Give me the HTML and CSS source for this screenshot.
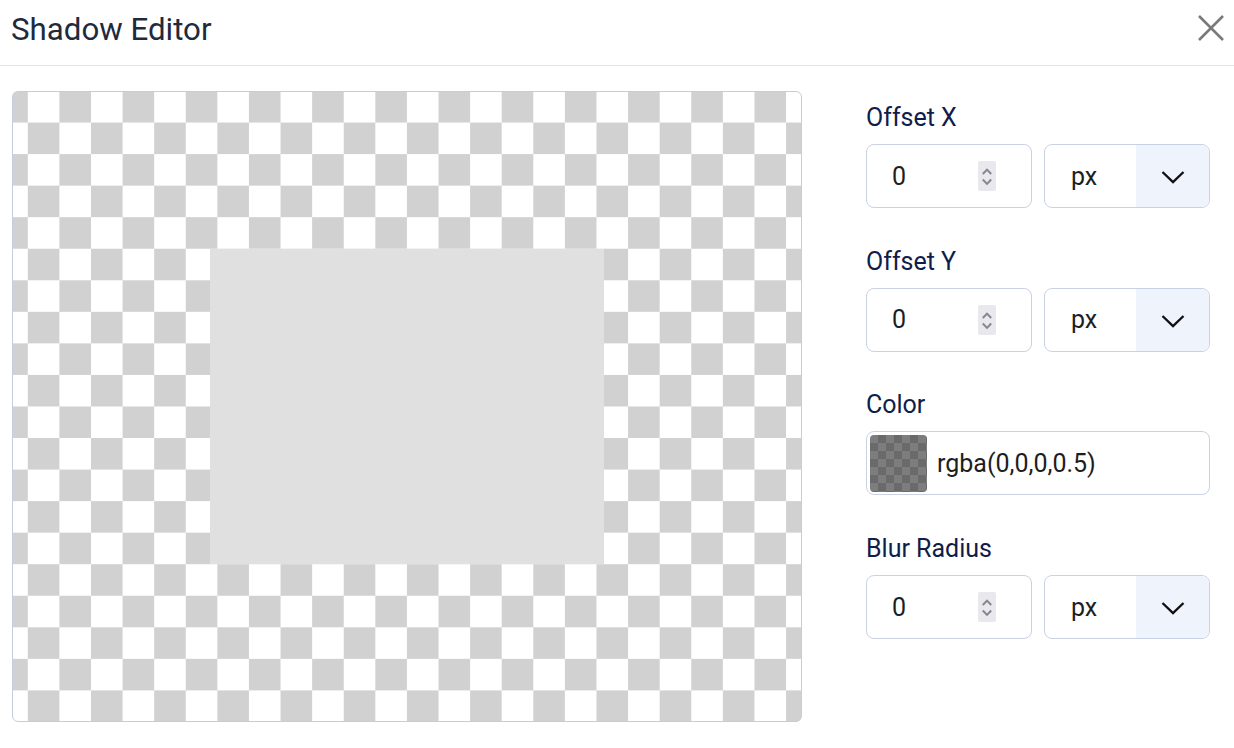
FILE: index.html
```html
<!DOCTYPE html>
<html lang="en">
<head>
<meta charset="utf-8">
<title>Shadow Editor</title>
<link rel="stylesheet" href="styles.css">
</head>
<body>
<div class="dialog">
  <header class="header">
    <h1 class="title">Shadow Editor</h1>
    <button class="close" aria-label="Close">
      <svg width="26" height="26" viewBox="0 0 26 26"><path d="M1 1L25 25M25 1L1 25" stroke="#7a7a7a" stroke-width="2.6" fill="none"/></svg>
    </button>
  </header>
  <main class="content">
    <div class="preview">
      <div class="shape"></div>
    </div>
    <div class="panel">
      <div class="field">
        <label class="label">Offset X</label>
        <div class="pair">
          <div class="num">
            <span class="value">0</span>
            <span class="spin">
              <svg width="18" height="30" viewBox="0 0 18 30"><path d="M4.8 13L9 8.6L13.2 13M4.8 18.5L9 22.9L13.2 18.5" stroke="#86868c" stroke-width="2" fill="none"/></svg>
            </span>
          </div>
          <div class="select">
            <span class="unit">px</span>
            <span class="arrow"><svg width="26" height="16" viewBox="0 0 26 16"><path d="M2.5 3L13 13L23.5 3" stroke="#111" stroke-width="2.4" fill="none"/></svg></span>
          </div>
        </div>
      </div>
      <div class="field">
        <label class="label">Offset Y</label>
        <div class="pair">
          <div class="num">
            <span class="value">0</span>
            <span class="spin">
              <svg width="18" height="30" viewBox="0 0 18 30"><path d="M4.8 13L9 8.6L13.2 13M4.8 18.5L9 22.9L13.2 18.5" stroke="#86868c" stroke-width="2" fill="none"/></svg>
            </span>
          </div>
          <div class="select">
            <span class="unit">px</span>
            <span class="arrow"><svg width="26" height="16" viewBox="0 0 26 16"><path d="M2.5 3L13 13L23.5 3" stroke="#111" stroke-width="2.4" fill="none"/></svg></span>
          </div>
        </div>
      </div>
      <div class="field">
        <label class="label">Color</label>
        <div class="color">
          <span class="swatch"></span>
          <span class="cvalue">rgba(0,0,0,0.5)</span>
        </div>
      </div>
      <div class="field">
        <label class="label">Blur Radius</label>
        <div class="pair">
          <div class="num">
            <span class="value">0</span>
            <span class="spin">
              <svg width="18" height="30" viewBox="0 0 18 30"><path d="M4.8 13L9 8.6L13.2 13M4.8 18.5L9 22.9L13.2 18.5" stroke="#86868c" stroke-width="2" fill="none"/></svg>
            </span>
          </div>
          <div class="select">
            <span class="unit">px</span>
            <span class="arrow"><svg width="26" height="16" viewBox="0 0 26 16"><path d="M2.5 3L13 13L23.5 3" stroke="#111" stroke-width="2.4" fill="none"/></svg></span>
          </div>
        </div>
      </div>
    </div>
  </main>
</div>
</body>
</html>
```
FILE: styles.css
```css
* { box-sizing: border-box; }
html, body { margin: 0; padding: 0; background: #fff; }
body {
  font-family: Roboto, "Liberation Sans", Arial, sans-serif;
  width: 1234px;
  height: 748px;
  overflow: hidden;
}
.header {
  height: 66px;
  border-bottom: 1px solid #e1e3e8;
  display: flex;
  justify-content: space-between;
  align-items: flex-start;
  padding: 12px 10px 0 11px;
}
.title {
  margin: 0;
  font-size: 31.25px;
  line-height: 36px;
  font-weight: 400;
  color: #1f2a3e;
}
.close {
  border: 0;
  background: none;
  padding: 0;
  margin-top: 3px;
  width: 26px;
  height: 26px;
  display: block;
}
.close svg { display: block; }
.content {
  display: flex;
  gap: 64px;
  padding: 25px 0 0 12px;
}
.preview {
  width: 790px;
  height: 631px;
  border: 1px solid #c3cddc;
  border-radius: 6px;
  background-color: #fff;
  background-image: conic-gradient(#fff 25%, #d1d1d1 0 50%, #fff 0 75%, #d1d1d1 0);
  background-size: 63.2px 63.1px;
  background-origin: border-box;
  background-position: -15.8px 0;
  display: flex;
  align-items: center;
  justify-content: center;
}
.shape {
  width: 50%;
  height: 50%;
  background: #e0e0e0;
}
.panel {
  width: 344px;
  padding-top: 13px;
  display: flex;
  flex-direction: column;
  gap: 39.7px;
}
.field {
  display: flex;
  flex-direction: column;
  gap: 12px;
}
.label {
  font-size: 25px;
  line-height: 28px;
  color: #0e1d4a;
}
.pair {
  display: grid;
  grid-template-columns: 1fr 1fr;
  gap: 12px;
}
.num, .select, .color {
  height: 64px;
  border: 1px solid #c9d2e2;
  border-radius: 8px;
  display: flex;
  align-items: center;
  background: #fff;
}
.num {
  padding: 0 35px 0 25px;
  justify-content: space-between;
}
.value, .unit, .cvalue {
  font-size: 25px;
  color: #1e1e1e;
}
.spin {
  width: 18px;
  height: 30px;
  background: #e8e8ee;
  border-radius: 2px;
  display: block;
}
.spin svg { display: block; }
.select {
  overflow: hidden;
  justify-content: space-between;
  padding-left: 26px;
}
.arrow {
  width: 73px;
  height: 100%;
  background: #eff3fb;
  display: flex;
  align-items: center;
  justify-content: center;
}
.arrow svg { display: block; margin-top: 2px; }
.color {
  padding: 0 3px;
  gap: 10px;
}
.swatch {
  width: 57px;
  height: 57px;
  border-radius: 4px;
  background-color: #7a7a7a;
  background-image: conic-gradient(#6a6a6a 25%, #7d7d7d 0 50%, #6a6a6a 0 75%, #7d7d7d 0);
  background-size: 16px 16px;
}
```
